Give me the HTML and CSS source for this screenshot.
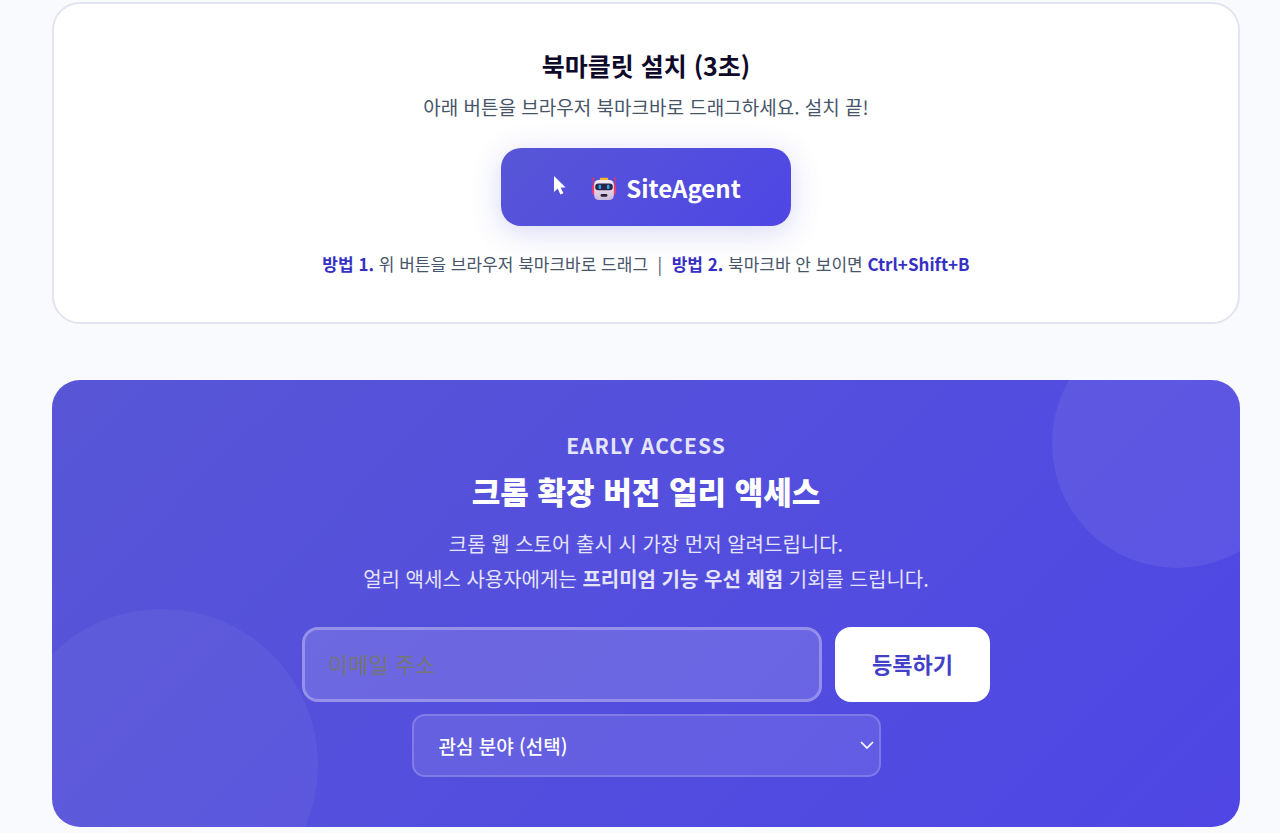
FILE: index.html
```html
<!DOCTYPE html>
<html lang="ko">

<head>
    <meta charset="UTF-8">
    <meta name="viewport" content="width=device-width, initial-scale=1">
    <title>SiteAgent</title>
    <link rel="stylesheet" href="styles.css">
</head>

<body>
    <main class="page">
        <section class="install">
            <h2>북마클릿 설치 (3초)</h2>
            <p class="install-desc">아래 버튼을 브라우저 북마크바로 드래그하세요. 설치 끝!</p>
            <a class="bookmarklet" href="#">
                <svg class="cursor" viewBox="0 0 12 19" aria-hidden="true">
                    <path d="M0 0V16L3.7 12.6L6.4 18.6L9.4 17.3L6.7 11.5H11.6Z" fill="#fff" />
                </svg>
                <svg class="robot" viewBox="0 0 24 24" aria-hidden="true">
                    <defs>
                        <linearGradient id="face" x1="0" y1="0" x2="0" y2="1">
                            <stop offset="0" stop-color="#f4edf2" />
                            <stop offset="1" stop-color="#cdbbdc" />
                        </linearGradient>
                    </defs>
                    <circle cx="1.3" cy="1.4" r="1" fill="#f0305a" />
                    <circle cx="22.7" cy="1.4" r="1" fill="#f0305a" />
                    <path d="M1.3 2V10M22.7 2V10" stroke="#d23a6c" stroke-width="1.2" />
                    <rect x="0.2" y="8" width="4" height="9.5" rx="1.5" fill="#f23d68" />
                    <rect x="19.8" y="8" width="4" height="9.5" rx="1.5" fill="#f23d68" />
                    <rect x="7.8" y="0.8" width="8.4" height="4" rx="1.4" fill="#f6b52e" />
                    <rect x="2.2" y="3" width="19.6" height="20" rx="4.5" fill="url(#face)" />
                    <rect x="3.2" y="6.6" width="17.6" height="6.6" rx="3.3" fill="#2b2447" />
                    <rect x="6.5" y="7.8" width="2.6" height="4.2" rx="1" fill="#28a4e8" />
                    <rect x="14.9" y="7.8" width="2.6" height="4.2" rx="1" fill="#28a4e8" />
                    <rect x="8.6" y="17" width="6.8" height="2.8" rx="1.4" fill="#2b2038" />
                </svg>
                <span>SiteAgent</span>
            </a>
            <p class="install-hint"><strong>방법 1.</strong> 위 버튼을 브라우저 북마크바로 드래그 &nbsp;|&nbsp; <strong>방법 2.</strong> 북마크바 안 보이면 <strong>Ctrl+Shift+B</strong></p>
        </section>

        <section class="early">
            <p class="eyebrow">EARLY ACCESS</p>
            <h2>크롬 확장 버전 얼리 액세스</h2>
            <p class="early-desc">크롬 웹 스토어 출시 시 가장 먼저 알려드립니다.<br>얼리 액세스 사용자에게는 <strong>프리미엄 기능 우선 체험</strong> 기회를 드립니다.</p>
            <form class="signup">
                <div class="signup-row">
                    <input type="email" placeholder="이메일 주소" aria-label="이메일 주소">
                    <button type="submit">등록하기</button>
                </div>
                <div class="select-wrap">
                    <select aria-label="관심 분야">
                        <option>관심 분야 (선택)</option>
                    </select>
                    <svg class="chevron" viewBox="0 0 14 8" aria-hidden="true">
                        <path d="M1 1L7 7L13 1" fill="none" stroke="#fff" stroke-width="1.7" />
                    </svg>
                </div>
            </form>
        </section>
    </main>
</body>

</html>
```

FILE: styles.css
```css
* {
    box-sizing: border-box;
}

body {
    margin: 0;
    background: #f8fafd;
    color: #475569;
    font-family: "Noto Sans CJK KR", "Noto Sans", sans-serif;
}

h2,
p {
    margin: 0;
}

.page {
    display: flex;
    flex-direction: column;
    gap: 56px;
    padding: 2px 40px 6px 52px;
}

/* 북마클릿 설치 */

.install {
    background: #fff;
    border: 2px solid #e2e4ef;
    border-radius: 28px;
    padding: 42px 40px 44px;
    text-align: center;
}

.install h2 {
    color: #0f0a2a;
    font-size: 25px;
    line-height: 38px;
}

.install-desc {
    margin-top: 8px;
    font-size: 19px;
    line-height: 30px;
}

.bookmarklet {
    display: inline-flex;
    align-items: center;
    margin-top: 26px;
    height: 78px;
    padding: 0 50px 0 53px;
    border-radius: 20px;
    background: linear-gradient(135deg, #5856d6, #4f46e5);
    box-shadow: 0 6px 30px rgba(88, 86, 214, 0.24);
    color: #fff;
    font-size: 24px;
    font-weight: 700;
    text-decoration: none;
}

.cursor {
    width: 12px;
    height: 19px;
    margin: 0 26px 4px 0;
}

.robot {
    width: 24px;
    height: 24px;
    margin: 4px 10px 0 0;
}

.install-hint {
    margin-top: 24px;
    font-size: 17px;
    line-height: 28px;
}

.install-hint strong {
    color: #3730c4;
}

/* 얼리 액세스 */

.early {
    position: relative;
    overflow: hidden;
    border-radius: 28px;
    padding: 49px 40px 50px;
    background: linear-gradient(135deg, #5856d6, #4f46e5);
    color: #fff;
    text-align: center;
}

.early::before,
.early::after {
    content: "";
    position: absolute;
    border-radius: 50%;
}

.early::before {
    top: -62px;
    right: -62px;
    width: 250px;
    height: 250px;
    background: rgba(255, 255, 255, 0.07);
}

.early::after {
    bottom: -94px;
    left: -46px;
    width: 312px;
    height: 312px;
    background: rgba(255, 255, 255, 0.05);
}

.eyebrow {
    font-size: 21px;
    font-weight: 700;
    line-height: 32px;
    letter-spacing: 1px;
    opacity: 0.85;
}

.early h2 {
    margin-top: 6px;
    font-size: 31px;
    font-weight: 900;
    line-height: 48px;
}

.early-desc {
    margin-top: 11px;
    font-size: 20px;
    line-height: 35px;
    opacity: 0.85;
}

.signup {
    position: relative;
    z-index: 1;
    max-width: 688px;
    margin: 31px auto 0;
}

.signup-row {
    display: flex;
    gap: 13px;
}

.signup input,
.signup button,
.signup select {
    font-family: inherit;
    color: #fff;
}

.signup input {
    flex: 1;
    min-width: 0;
    height: 75px;
    padding: 0 23px 4px;
    border: 3px solid rgba(255, 255, 255, 0.28);
    border-radius: 16px;
    background: rgba(255, 255, 255, 0.14);
    font-size: 22px;
}

.signup input::placeholder {
    color: #757575;
}

.signup button {
    height: 75px;
    padding: 0 37px 4px;
    border: 0;
    border-radius: 16px;
    background: #fff;
    color: #4340c8;
    font-size: 22px;
    font-weight: 700;
}

.select-wrap {
    position: relative;
    max-width: 469px;
    margin: 12px auto 0;
}

.signup select {
    display: block;
    appearance: none;
    width: 100%;
    height: 63px;
    padding: 0 25px;
    border: 2px solid rgba(255, 255, 255, 0.18);
    border-radius: 13px;
    background: rgba(255, 255, 255, 0.1);
    font-size: 19px;
    font-weight: 500;
}

.chevron {
    position: absolute;
    top: 27px;
    right: 7px;
    width: 14px;
    height: 8px;
    pointer-events: none;
}
```
